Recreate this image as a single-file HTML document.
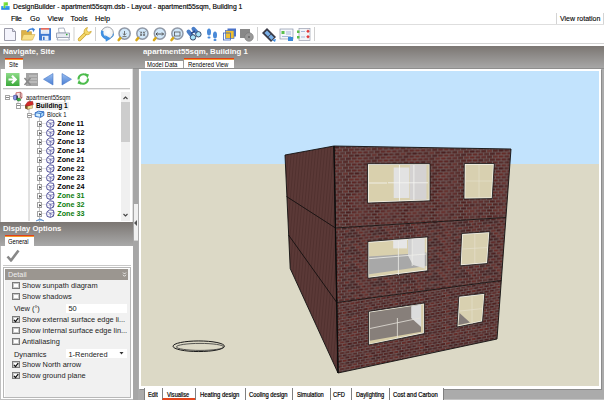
<!DOCTYPE html>
<html><head><meta charset="utf-8">
<style>
*{margin:0;padding:0;box-sizing:border-box}
html,body{width:604px;height:400px;overflow:hidden;background:#fff}
body{position:relative;font-family:"Liberation Sans",sans-serif;color:#000}
.a{position:absolute}
.t{position:absolute;white-space:nowrap;line-height:1}
.hd{background:linear-gradient(#7b7672,#a9a9a9)}
.cb{position:absolute;width:8px;height:7.6px;border:1px solid #7a7a7a;background:#fff;box-shadow:inset 0 0 0 1px #c8c8c8}
.lbl{font-size:7.4px;color:#222}
.ex{position:absolute;width:5px;height:5.5px;border:1px solid #a4a4a4;background:#fff;border-radius:0.5px}
.tab{position:absolute;top:388px;height:12px;background:#fff;border-left:1px solid #808080;border-right:1px solid #808080}
.tt{position:absolute;top:391.6px;font-size:5.9px;white-space:nowrap;line-height:1;color:#000;-webkit-text-stroke:0.2px #000}
</style></head><body>

<!-- ============ title bar ============ -->
<svg class="a" style="left:0;top:0" width="12" height="12" viewBox="0 0 12 12">
 <defs><linearGradient id="ig" x1="0" y1="0" x2="1" y2="1"><stop offset="0" stop-color="#9af04a"/><stop offset="1" stop-color="#3cc020"/></linearGradient>
 <linearGradient id="ib" x1="0" y1="0" x2="0" y2="1"><stop offset="0" stop-color="#48b0f8"/><stop offset="1" stop-color="#1a78e0"/></linearGradient></defs>
 <path d="M1.2 6h2.4v2h1.6v-2h4.4v3.8h-8.4z" fill="url(#ib)"/>
 <path d="M3.6 2.2h4.2v3.4h-2.6v2.6h-1.6z" fill="url(#ig)"/>
</svg>
<div class="t" style="left:13px;top:3.8px;font-size:6.8px;color:#000;-webkit-text-stroke:0.15px #000">DesignBuilder - apartment55sqm.dsb - Layout - apartment55sqm, Building 1</div>

<!-- ============ menu ============ -->
<div class="t" style="left:11px;top:15.1px;font-size:7.3px;-webkit-text-stroke:0.12px #000;letter-spacing:-0.3px">File</div>
<div class="t" style="left:30px;top:15.1px;font-size:7.3px;-webkit-text-stroke:0.12px #000">Go</div>
<div class="t" style="left:47.5px;top:15.1px;font-size:7.3px;-webkit-text-stroke:0.12px #000">View</div>
<div class="t" style="left:70.5px;top:15.1px;font-size:7.3px;-webkit-text-stroke:0.12px #000">Tools</div>
<div class="t" style="left:95px;top:15.1px;font-size:7.3px;-webkit-text-stroke:0.12px #000">Help</div>
<div class="a" style="left:556px;top:13px;width:47.5px;height:11px;border-left:1px solid #d4d4d4;border-right:1px solid #d4d4d4;background:#fff"></div>
<div class="t" style="left:560px;top:14.8px;font-size:7px;-webkit-text-stroke:0.1px #000">View rotation</div>
<div class="a" style="left:0;top:24px;width:604px;height:1px;background:#dedede"></div>

<!-- ============ toolbar ============ -->
<svg class="a" style="left:0;top:25px" width="320" height="18" viewBox="0 25 320 18">
 <!-- new -->
 <path d="M4.5 28.5h8l3 3v9h-11z" fill="#f4f4fc" stroke="#9a9aa8"/>
 <path d="M12.5 28.5v3h3" fill="#dde" stroke="#9a9aa8"/>
 <!-- open -->
 <path d="M21.5 30.5h4.5l1 1.2h4.5v8.3h-10z" fill="#dcb248" stroke="#b88c28" stroke-width="0.5"/>
 <path d="M23.5 34.5h11.5l-2.5 5.5h-11z" fill="#f8df88" stroke="#c9a23c" stroke-width="0.5"/>
 <path d="M27.5 32c1-2.5 3.5-3.6 5.6-2.6" fill="none" stroke="#3a7fd8" stroke-width="1.5"/>
 <path d="M32 27.5l3 1.8-1.8 3z" fill="#3a7fd8"/>
 <!-- save -->
 <rect x="39" y="28" width="12" height="12.5" rx="0.8" fill="#3d78d0"/>
 <rect x="40.8" y="28.2" width="8.4" height="5.6" fill="#f0f4fa"/>
 <rect x="40.8" y="28.2" width="8.4" height="1.4" fill="#e8503a"/>
 <path d="M41.8 31h6.4M41.8 32.4h6.4" stroke="#c8d4e8" stroke-width="0.5"/>
 <rect x="42" y="35.8" width="6.5" height="4.7" fill="#e4ecf8"/>
 <rect x="43" y="36.8" width="1.6" height="3.2" fill="#3d78d0"/>
 <!-- print -->
 <path d="M58.5 28.3l5.5-0.3 1.5 5h-6.5z" fill="#fff" stroke="#8a94a8" stroke-width="0.7"/>
 <path d="M56.5 33h13v4.8h-13z" fill="#e6e9f0" stroke="#8a94a8" stroke-width="0.8"/>
 <path d="M58 37.5h10.5l1 2.5h-12.5z" fill="#fff" stroke="#8a94a8" stroke-width="0.7"/>
 <circle cx="66.8" cy="34.6" r="0.8" fill="#2a2"/>
 <!-- sep -->
 <rect x="73.5" y="27" width="1" height="14" fill="#d0d0d0"/>
 <!-- wrench -->
 <path d="M79.5 39.5l6.5-6.5" stroke="#c9a02a" stroke-width="3.4" stroke-linecap="round"/>
 <path d="M79.5 39.5l6.5-6.5" stroke="#f4d86a" stroke-width="2.2" stroke-linecap="round"/>
 <path d="M84.5 33.5a4.2 4.2 0 0 1 3-6l-1 2.6 2.2 2.2 2.6-1a4.2 4.2 0 0 1-6 3z" fill="#f4d86a" stroke="#c9a02a" stroke-width="0.7"/>
 <rect x="95" y="27" width="1" height="14" fill="#d0d0d0"/>
 <!-- orbit bubble -->
 <defs><radialGradient id="bub" cx="0.55" cy="0.4" r="0.65"><stop offset="0" stop-color="#fff"/><stop offset="0.7" stop-color="#eef0f2"/><stop offset="1" stop-color="#b8bcc4"/></radialGradient></defs>
 <circle cx="107.4" cy="33" r="6" fill="url(#bub)" stroke="#8c9098" stroke-width="0.8"/>
 <path d="M102.4 30.8A5.6 5.6 0 0 0 106.4 38.2" fill="none" stroke="#3f90e2" stroke-width="2.6"/>
 <path d="M105.2 35.2l5.8 3.4-5.2 3.2z" fill="#3f90e2"/>
 <path d="M111.2 37.6c1.5-1 2.4-2.4 2.3-4" fill="none" stroke="#3f90e2" stroke-width="1.1"/>
 <!-- zoom icons -->
 <g id="zm">
  <circle cx="124.6" cy="33.6" r="5.6" fill="#d2e8fa" stroke="#9098a6" stroke-width="1.5"/>
  <path d="M120.3 38.2l-1.6 1.8" stroke="#d8a818" stroke-width="2.6" stroke-linecap="round"/>
 </g>
 <path d="M124.5 31v4M122.8 33.5l1.7 1.7 1.7-1.7M122.5 36.6h4" fill="none" stroke="#555" stroke-width="0.8"/>
 <use href="#zm" x="17.8"/>
 <path d="M139.8 31.3l1.8 1.8M141.6 31.6v1.5h-1.5M145.4 31.3l-1.8 1.8M143.6 31.6v1.5h1.5M139.8 36.3l1.8-1.8M141.6 36v-1.5h-1.5M145.4 36.3l-1.8-1.8M143.6 36v-1.5h1.5" fill="none" stroke="#555" stroke-width="0.7"/>
 <use href="#zm" x="35.3"/>
 <path d="M156 34h7.5M157.5 32.5l-1.5 1.5 1.5 1.5M162 32.5l1.5 1.5-1.5 1.5" fill="none" stroke="#444" stroke-width="0.9"/>
 <use href="#zm" x="52.8"/>
 <rect x="174.5" y="32" width="5.5" height="4" fill="none" stroke="#555" stroke-width="0.8"/>
 <!-- binoculars -->
 <path d="M188.5 31.5L193 37.2M193.5 28.8L198.3 34.2" stroke="#4a7ec8" stroke-width="4" stroke-linecap="round"/>
 <path d="M191 33.5l4-2.5" stroke="#2a4a88" stroke-width="1.5"/>
 <circle cx="193" cy="37.4" r="2.7" fill="#a8e4fa" stroke="#2a3a5a" stroke-width="0.9"/>
 <circle cx="198.4" cy="34.3" r="2.7" fill="#a8e4fa" stroke="#2a3a5a" stroke-width="0.9"/>
 <!-- footprints -->
 <ellipse cx="209" cy="32" rx="2" ry="3.5" fill="#4a8ad8"/>
 <rect x="207.5" y="36.5" width="3" height="2" rx="1" fill="#4a8ad8"/>
 <ellipse cx="215" cy="35" rx="2" ry="3.5" fill="#4a8ad8"/>
 <rect x="213.5" y="39" width="3" height="2" rx="1" fill="#4a8ad8"/>
 <!-- layers -->
 <rect x="227.5" y="28.5" width="8.5" height="8" fill="#4a72c8"/>
 <rect x="225.5" y="30.5" width="8.5" height="8" fill="#f0c030" stroke="#4a72c8" stroke-width="0.7"/>
 <rect x="223.5" y="33" width="7" height="7" fill="none" stroke="#3a62b8" stroke-width="0.8"/>
 <!-- grey camera -->
 <rect x="240" y="29" width="10" height="9" fill="#888"/>
 <circle cx="249" cy="37" r="4.3" fill="#999" stroke="#777" stroke-width="0.6"/>
 <circle cx="249" cy="37" r="1" fill="#666"/>
 <rect x="257" y="27" width="1" height="14" fill="#d0d0d0"/>
 <!-- film strip -->
 <path d="M262 33l5-5 9 9-5 5z" fill="#3a3a46"/>
 <path d="M264.5 33l2.5-2.5 3.5 3.5-2.5 2.5z" fill="#7ab0e8"/>
 <path d="M268.5 37l2.5-2.5 3 3-2.5 2.5z" fill="#7ab0e8"/>
 <path d="M272 40l4-1-1 3z" fill="#3a8ae0"/>
 <!-- dialog arrow -->
 <rect x="280" y="29" width="13" height="10" fill="#f4f6fa" stroke="#8a94a8" stroke-width="0.7"/>
 <rect x="281.5" y="31" width="3" height="3" fill="#5ac04a"/>
 <path d="M286 32h5M286 34h5M282 36.5h9" stroke="#8aa0c8" stroke-width="0.7"/>
 <path d="M288 37h5v4h-5z" fill="#3a88d8"/>
 <!-- form with diamonds -->
 <rect x="299" y="28.5" width="11" height="12" fill="#f2f4f8" stroke="#9aa0b0" stroke-width="0.7"/>
 <rect x="297" y="30.5" width="2.5" height="2.5" fill="#5ac04a"/>
 <rect x="297" y="36" width="2.5" height="2.5" fill="#5ac04a"/>
 <path d="M301 31.5h4M301 37h4" stroke="#8aa0c8" stroke-width="0.7"/>
 <path d="M308 29.5l1.8 1.8-1.8 1.8-1.8-1.8z M308 35l1.8 1.8-1.8 1.8-1.8-1.8z" fill="#e03838"/>
 <rect x="314" y="27" width="1" height="14" fill="#d0d0d0"/>
</svg>
<div class="a" style="left:0;top:42.5px;width:604px;height:1px;background:#d4d4d4"></div>

<!-- ============ gray app background + header band ============ -->
<div class="a" style="left:0;top:46px;width:604px;height:354px;background:#ababab"></div>
<div class="a hd" style="left:0;top:46px;width:604px;height:23px"></div>
<div class="t" style="left:3.2px;top:48.2px;font-size:7.2px;font-weight:bold;color:#fafafa;transform:scaleX(1.10);transform-origin:0 0">Navigate, Site</div>
<div class="t" style="left:142.6px;top:47.8px;font-size:7.2px;font-weight:bold;color:#fafafa;transform:scaleX(1.09);transform-origin:0 0">apartment55sqm, Building 1</div>

<!-- Site tab -->
<div class="a" style="left:5px;top:58px;width:18px;height:11px;background:#fff;border-top:1px solid #e0401c;box-shadow:inset 0 1px 0 #f39a2a"></div>
<div class="t" style="left:9px;top:61.8px;font-size:7.1px;transform:scaleX(0.74);transform-origin:0 0">Site</div>

<!-- ============ left nav panel ============ -->
<div class="a" style="left:0;top:69px;width:133px;height:153px;background:#fff"></div>
<div class="a" style="left:132px;top:69px;width:1px;height:153px;background:#e0e0e0"></div>
<!-- nav icons -->
<svg class="a" style="left:0;top:69px" width="100" height="20" viewBox="0 69 100 20">
 <defs><linearGradient id="gg" x1="0" y1="0" x2="0" y2="1"><stop offset="0" stop-color="#8fdc8a"/><stop offset="1" stop-color="#3aa83a"/></linearGradient></defs>
 <rect x="6" y="73" width="13.5" height="13" fill="url(#gg)"/>
 <path d="M8.5 79.5h7M12 75.8l3.7 3.7-3.7 3.7" fill="none" stroke="#fff" stroke-width="2.2"/>
 <rect x="26" y="73" width="12" height="13" fill="#a4a4a4"/>
 <path d="M29 76h8M29 79h8M29 82h8" stroke="#cfcfcf" stroke-width="1"/>
 <path d="M24.5 85l6-7M24.5 78l6 7" stroke="#8a8a8a" stroke-width="1.6"/>
 <defs><linearGradient id="tb" x1="0" y1="0" x2="0" y2="1"><stop offset="0" stop-color="#9cc0f0"/><stop offset="1" stop-color="#4a7ed4"/></linearGradient></defs>
 <path d="M53 73.5v11.5l-9.5-5.75z" fill="url(#tb)" stroke="#4a78c8" stroke-width="0.6"/>
 <path d="M62 73.5v11.5l9.5-5.75z" fill="url(#tb)" stroke="#4a78c8" stroke-width="0.6"/>
 <path d="M78.5 79.5a5 5 0 0 1 8.5-3.8" fill="none" stroke="#4cbc4c" stroke-width="2"/>
 <path d="M85 73.2l4 1.2-1.6 4z" fill="#4cbc4c"/>
 <path d="M88 78.5a5 5 0 0 1-8.5 3.8" fill="none" stroke="#4cbc4c" stroke-width="2"/>
 <path d="M81.5 84.8l-4-1.2 1.6-4z" fill="#4cbc4c"/>
</svg>
<div class="a" style="left:3px;top:88px;width:127px;height:1px;background:#c4c4c4"></div><div class="a" style="left:3px;top:89px;width:127px;height:1px;background:#ececec"></div>

<!-- tree -->
<div class="a" style="left:121px;top:92px;width:9px;height:129px;background:#f0f0f0"></div>
<div class="a" style="left:121px;top:102px;width:9px;height:40px;background:#cdcdcd"></div>
<svg class="a" style="left:121px;top:93px" width="9" height="9"><path d="M2.5 6l2-2 2 2" fill="none" stroke="#444" stroke-width="1.1"/></svg>
<svg class="a" style="left:121px;top:211px" width="9" height="9"><path d="M2.5 3l2 2 2-2" fill="none" stroke="#444" stroke-width="1.1"/></svg>

<svg class="a" style="left:0;top:89px" width="121" height="133" viewBox="0 89 121 133">
 <g stroke="#c4c4c4" stroke-width="1" fill="none">
  <path d="M18 100v5.5M29 109v112M39.5 118v104"/>
  <path d="M42.5 123.5h3M42.5 132.5h3M42.5 141.5h3M42.5 150.5h3M42.5 159.5h3M42.5 168.5h3M42.5 177.5h3M42.5 186.5h3M42.5 195.5h3M42.5 204.5h3M42.5 213.5h3" stroke-dasharray="1 1"/>
  <path d="M10 96.5h3M20.5 105.5h4M31 114.5h4"/>
 </g>
</svg>
<div class="ex" style="left:5px;top:94.5px"></div><div class="a" style="left:6px;top:96.6px;width:3px;height:1px;background:#8a8a8a"></div>
<div class="ex" style="left:15.5px;top:103px"></div><div class="a" style="left:16.5px;top:105.1px;width:3px;height:1px;background:#8a8a8a"></div>
<div class="ex" style="left:26.5px;top:112.5px"></div><div class="a" style="left:27.5px;top:114.6px;width:3px;height:1px;background:#8a8a8a"></div>

<!-- tree icons -->
<svg class="a" style="left:12px;top:91px" width="12" height="11" viewBox="12 91 12 11">
 <path d="M16 92.8l4.3-0.6 1.6 1.2v4.6l-4.5 0.6-1.4-1z" fill="#f8e4e4" stroke="#b02828" stroke-width="0.6"/>
 <path d="M20.3 92.2v4.8l1.6 1.2" fill="none" stroke="#6a1818" stroke-width="0.6"/>
 <path d="M13.6 95.6l2.6-0.6 1 0.7v3.8l-2.6 0.4-1-0.7z" fill="#8c9ce8" stroke="#30308a" stroke-width="0.6"/>
 <path d="M17.1 95.7v3.9" stroke="#111" stroke-width="1"/>
 <path d="M17 98.6l2.4-0.5 1.2 0.9v1.6l-2.4 0.4-1.2-0.8z" fill="#3cb04a" stroke="#1a6a28" stroke-width="0.5"/>
</svg>
<svg class="a" style="left:24px;top:101px" width="10" height="9" viewBox="24 101 10 9">
 <path d="M25 105.5l2.5-2.5 2.5 2.5v3.5l-2.5 0.5-2.5-1z" fill="#7a5a2a"/>
 <path d="M27.5 106l5-1v3.2l-5 1z" fill="#f0df9a" stroke="#8a6a30" stroke-width="0.4"/>
 <path d="M25 105.5l2.8-3.8 4.8-0.4 0.8 3.2-5.4 1.4z" fill="#d42a2a" stroke="#8a1a1a" stroke-width="0.4"/>
</svg>
<svg class="a" style="left:34px;top:110px" width="11" height="9" viewBox="34 110 11 9">
 <path d="M35.2 112.8l3.2-1.6 5.4 0.6v3.6l-3.2 1.9-5.4-0.9z" fill="#a8d8f8" stroke="#2a64c0" stroke-width="0.9"/>
 <path d="M35.2 112.8l5.4 0.8 3.2-1.8M40.6 113.6v3.7" fill="none" stroke="#2a64c0" stroke-width="0.8"/>
 <path d="M36.5 113.5l3.5 0.5v2.5l-3.5-0.5z" fill="#d8f0ff"/>
</svg>
<div class="a" style="left:35px;top:102px;width:34px;height:7.5px;background:#f0f0f0"></div>
<div class="t" style="left:25.8px;top:93.9px;color:#111;font-size:7.2px;transform:scaleX(0.824);transform-origin:0 0">apartment55sqm</div>
<div class="t" style="left:35.8px;top:102.7px;font-weight:bold;color:#000;font-size:6.9px;transform:scaleX(0.952);transform-origin:0 0">Building 1</div>
<div class="t" style="left:46.8px;top:110.6px;color:#111;font-size:7.6px;transform:scaleX(0.78);transform-origin:0 0">Block 1</div>

<div class="ex" style="left:37.2px;top:121.2px;width:5.2px;height:5.6px;border-color:#a0a0a0"></div><svg class="a" style="left:38.8px;top:122.7px" width="3" height="3"><path d="M0.3 0v2.8l1.8-1.4z" fill="#111"/></svg>
<svg class="a" style="left:45.5px;top:119.2px" width="9" height="9" viewBox="0 0 9 9"><path d="M1.2 2.6l2.6-1.8 3.6 0.6 0.6 2.6-0.6 3.2-3 1.2-3.2-1-0.6-2.6z" fill="none" stroke="#34348a" stroke-width="0.85"/><path d="M1.2 2.6l3.2 1.6 3.6-0.8M4.4 4.2v4.2M2.6 5.6l1.8-1.4 2.8 2.6" fill="none" stroke="#4a4a9a" stroke-width="0.6"/></svg>
<div class="t" style="left:57.3px;top:120.3px;font-size:7.2px;font-weight:bold;color:#000">Zone 11</div>
<div class="ex" style="left:37.2px;top:130.2px;width:5.2px;height:5.6px;border-color:#a0a0a0"></div><svg class="a" style="left:38.8px;top:131.7px" width="3" height="3"><path d="M0.3 0v2.8l1.8-1.4z" fill="#111"/></svg>
<svg class="a" style="left:45.5px;top:128.2px" width="9" height="9" viewBox="0 0 9 9"><path d="M1.2 2.6l2.6-1.8 3.6 0.6 0.6 2.6-0.6 3.2-3 1.2-3.2-1-0.6-2.6z" fill="none" stroke="#34348a" stroke-width="0.85"/><path d="M1.2 2.6l3.2 1.6 3.6-0.8M4.4 4.2v4.2M2.6 5.6l1.8-1.4 2.8 2.6" fill="none" stroke="#4a4a9a" stroke-width="0.6"/></svg>
<div class="t" style="left:57.3px;top:129.3px;font-size:7.2px;font-weight:bold;color:#000">Zone 12</div>
<div class="ex" style="left:37.2px;top:139.2px;width:5.2px;height:5.6px;border-color:#a0a0a0"></div><svg class="a" style="left:38.8px;top:140.7px" width="3" height="3"><path d="M0.3 0v2.8l1.8-1.4z" fill="#111"/></svg>
<svg class="a" style="left:45.5px;top:137.2px" width="9" height="9" viewBox="0 0 9 9"><path d="M1.2 2.6l2.6-1.8 3.6 0.6 0.6 2.6-0.6 3.2-3 1.2-3.2-1-0.6-2.6z" fill="none" stroke="#34348a" stroke-width="0.85"/><path d="M1.2 2.6l3.2 1.6 3.6-0.8M4.4 4.2v4.2M2.6 5.6l1.8-1.4 2.8 2.6" fill="none" stroke="#4a4a9a" stroke-width="0.6"/></svg>
<div class="t" style="left:57.3px;top:138.3px;font-size:7.2px;font-weight:bold;color:#000">Zone 13</div>
<div class="ex" style="left:37.2px;top:148.2px;width:5.2px;height:5.6px;border-color:#a0a0a0"></div><svg class="a" style="left:38.8px;top:149.7px" width="3" height="3"><path d="M0.3 0v2.8l1.8-1.4z" fill="#111"/></svg>
<svg class="a" style="left:45.5px;top:146.2px" width="9" height="9" viewBox="0 0 9 9"><path d="M1.2 2.6l2.6-1.8 3.6 0.6 0.6 2.6-0.6 3.2-3 1.2-3.2-1-0.6-2.6z" fill="none" stroke="#34348a" stroke-width="0.85"/><path d="M1.2 2.6l3.2 1.6 3.6-0.8M4.4 4.2v4.2M2.6 5.6l1.8-1.4 2.8 2.6" fill="none" stroke="#4a4a9a" stroke-width="0.6"/></svg>
<div class="t" style="left:57.3px;top:147.3px;font-size:7.2px;font-weight:bold;color:#000">Zone 14</div>
<div class="ex" style="left:37.2px;top:157.2px;width:5.2px;height:5.6px;border-color:#a0a0a0"></div><svg class="a" style="left:38.8px;top:158.7px" width="3" height="3"><path d="M0.3 0v2.8l1.8-1.4z" fill="#111"/></svg>
<svg class="a" style="left:45.5px;top:155.2px" width="9" height="9" viewBox="0 0 9 9"><path d="M1.2 2.6l2.6-1.8 3.6 0.6 0.6 2.6-0.6 3.2-3 1.2-3.2-1-0.6-2.6z" fill="none" stroke="#34348a" stroke-width="0.85"/><path d="M1.2 2.6l3.2 1.6 3.6-0.8M4.4 4.2v4.2M2.6 5.6l1.8-1.4 2.8 2.6" fill="none" stroke="#4a4a9a" stroke-width="0.6"/></svg>
<div class="t" style="left:57.3px;top:156.3px;font-size:7.2px;font-weight:bold;color:#000">Zone 21</div>
<div class="ex" style="left:37.2px;top:166.2px;width:5.2px;height:5.6px;border-color:#a0a0a0"></div><svg class="a" style="left:38.8px;top:167.7px" width="3" height="3"><path d="M0.3 0v2.8l1.8-1.4z" fill="#111"/></svg>
<svg class="a" style="left:45.5px;top:164.2px" width="9" height="9" viewBox="0 0 9 9"><path d="M1.2 2.6l2.6-1.8 3.6 0.6 0.6 2.6-0.6 3.2-3 1.2-3.2-1-0.6-2.6z" fill="none" stroke="#34348a" stroke-width="0.85"/><path d="M1.2 2.6l3.2 1.6 3.6-0.8M4.4 4.2v4.2M2.6 5.6l1.8-1.4 2.8 2.6" fill="none" stroke="#4a4a9a" stroke-width="0.6"/></svg>
<div class="t" style="left:57.3px;top:165.3px;font-size:7.2px;font-weight:bold;color:#000">Zone 22</div>
<div class="ex" style="left:37.2px;top:175.2px;width:5.2px;height:5.6px;border-color:#a0a0a0"></div><svg class="a" style="left:38.8px;top:176.7px" width="3" height="3"><path d="M0.3 0v2.8l1.8-1.4z" fill="#111"/></svg>
<svg class="a" style="left:45.5px;top:173.2px" width="9" height="9" viewBox="0 0 9 9"><path d="M1.2 2.6l2.6-1.8 3.6 0.6 0.6 2.6-0.6 3.2-3 1.2-3.2-1-0.6-2.6z" fill="none" stroke="#34348a" stroke-width="0.85"/><path d="M1.2 2.6l3.2 1.6 3.6-0.8M4.4 4.2v4.2M2.6 5.6l1.8-1.4 2.8 2.6" fill="none" stroke="#4a4a9a" stroke-width="0.6"/></svg>
<div class="t" style="left:57.3px;top:174.3px;font-size:7.2px;font-weight:bold;color:#000">Zone 23</div>
<div class="ex" style="left:37.2px;top:184.2px;width:5.2px;height:5.6px;border-color:#a0a0a0"></div><svg class="a" style="left:38.8px;top:185.7px" width="3" height="3"><path d="M0.3 0v2.8l1.8-1.4z" fill="#111"/></svg>
<svg class="a" style="left:45.5px;top:182.2px" width="9" height="9" viewBox="0 0 9 9"><path d="M1.2 2.6l2.6-1.8 3.6 0.6 0.6 2.6-0.6 3.2-3 1.2-3.2-1-0.6-2.6z" fill="none" stroke="#34348a" stroke-width="0.85"/><path d="M1.2 2.6l3.2 1.6 3.6-0.8M4.4 4.2v4.2M2.6 5.6l1.8-1.4 2.8 2.6" fill="none" stroke="#4a4a9a" stroke-width="0.6"/></svg>
<div class="t" style="left:57.3px;top:183.3px;font-size:7.2px;font-weight:bold;color:#000">Zone 24</div>
<div class="ex" style="left:37.2px;top:193.2px;width:5.2px;height:5.6px;border-color:#a0a0a0"></div><svg class="a" style="left:38.8px;top:194.7px" width="3" height="3"><path d="M0.3 0v2.8l1.8-1.4z" fill="#111"/></svg>
<svg class="a" style="left:45.5px;top:191.2px" width="9" height="9" viewBox="0 0 9 9"><path d="M1.2 2.6l2.6-1.8 3.6 0.6 0.6 2.6-0.6 3.2-3 1.2-3.2-1-0.6-2.6z" fill="none" stroke="#34348a" stroke-width="0.85"/><path d="M1.2 2.6l3.2 1.6 3.6-0.8M4.4 4.2v4.2M2.6 5.6l1.8-1.4 2.8 2.6" fill="none" stroke="#4a4a9a" stroke-width="0.6"/></svg>
<div class="t" style="left:57.3px;top:192.3px;font-size:7.2px;font-weight:bold;color:#0b7d0b">Zone 31</div>
<div class="ex" style="left:37.2px;top:202.2px;width:5.2px;height:5.6px;border-color:#a0a0a0"></div><svg class="a" style="left:38.8px;top:203.7px" width="3" height="3"><path d="M0.3 0v2.8l1.8-1.4z" fill="#111"/></svg>
<svg class="a" style="left:45.5px;top:200.2px" width="9" height="9" viewBox="0 0 9 9"><path d="M1.2 2.6l2.6-1.8 3.6 0.6 0.6 2.6-0.6 3.2-3 1.2-3.2-1-0.6-2.6z" fill="none" stroke="#34348a" stroke-width="0.85"/><path d="M1.2 2.6l3.2 1.6 3.6-0.8M4.4 4.2v4.2M2.6 5.6l1.8-1.4 2.8 2.6" fill="none" stroke="#4a4a9a" stroke-width="0.6"/></svg>
<div class="t" style="left:57.3px;top:201.3px;font-size:7.2px;font-weight:bold;color:#0b7d0b">Zone 32</div>
<div class="ex" style="left:37.2px;top:211.2px;width:5.2px;height:5.6px;border-color:#a0a0a0"></div><svg class="a" style="left:38.8px;top:212.7px" width="3" height="3"><path d="M0.3 0v2.8l1.8-1.4z" fill="#111"/></svg>
<svg class="a" style="left:45.5px;top:209.2px" width="9" height="9" viewBox="0 0 9 9"><path d="M1.2 2.6l2.6-1.8 3.6 0.6 0.6 2.6-0.6 3.2-3 1.2-3.2-1-0.6-2.6z" fill="none" stroke="#34348a" stroke-width="0.85"/><path d="M1.2 2.6l3.2 1.6 3.6-0.8M4.4 4.2v4.2M2.6 5.6l1.8-1.4 2.8 2.6" fill="none" stroke="#4a4a9a" stroke-width="0.6"/></svg>
<div class="t" style="left:57.3px;top:210.3px;font-size:7.2px;font-weight:bold;color:#0b7d0b">Zone 33</div>
<svg class="a" style="left:35px;top:218px" width="10" height="4" viewBox="0 0 10 4"><path d="M1 3l4-2 4 2" fill="#a8d0f4" stroke="#3a70b8" stroke-width="0.8"/></svg>

<!-- ============ display options ============ -->
<div class="a hd" style="left:0;top:222px;width:133px;height:24px"></div>
<div class="t" style="left:3.1px;top:225.2px;font-size:7.2px;font-weight:bold;color:#fafafa;transform:scaleX(1.066);transform-origin:0 0">Display Options</div>
<div class="a" style="left:5px;top:235px;width:29px;height:11px;background:#fff;border-top:1px solid #e0401c;box-shadow:inset 0 1px 0 #f39a2a"></div>
<div class="t" style="left:8.1px;top:238.8px;font-size:7.1px;transform:scaleX(0.816);transform-origin:0 0">General</div>
<div class="a" style="left:0;top:246px;width:133px;height:154px;background:#fff"></div>
<svg class="a" style="left:6px;top:249px" width="14" height="13" viewBox="0 0 14 13"><path d="M1.5 7.5l3.5 4 7.5-10" fill="none" stroke="#888" stroke-width="2.6" stroke-linejoin="round"/></svg>
<div class="a" style="left:3px;top:265px;width:128px;height:1px;background:#c8c8c8"></div>
<div class="a" style="left:2.5px;top:266.5px;width:128.5px;height:131px;border:1px solid #b8b8b8;background:#f1f1f1;box-shadow:inset 1px 1px 0 #fff"></div>
<div class="a" style="left:5px;top:269px;width:123px;height:10.5px;background:#9b9690"></div>
<div class="t" style="left:8px;top:271px;font-size:7.3px;color:#eee">Detail</div>
<svg class="a" style="left:121.5px;top:271px" width="5" height="7"><path d="M1 1.5l1.5 1.5 1.5-1.5M1 3.8l1.5 1.5 1.5-1.5" fill="none" stroke="#f4f4f4" stroke-width="0.9"/></svg>

<div class="cb" style="left:12px;top:281.5px"></div><div class="t lbl" style="left:22px;top:281.8px">Show sunpath diagram</div>
<div class="cb" style="left:12px;top:292.5px"></div><div class="t lbl" style="left:22px;top:292.8px">Show shadows</div>
<div class="t lbl" style="left:14px;top:305px">View (°)</div>
<div class="a" style="left:66px;top:303.5px;width:60.5px;height:9px;background:#fff"></div>
<div class="t lbl" style="left:68.5px;top:305px">50</div>
<div class="cb" style="left:12px;top:315.5px"></div><div class="t lbl" style="left:22px;top:315.8px">Show external surface edge li...</div>
<div class="cb" style="left:12px;top:326.5px"></div><div class="t lbl" style="left:22px;top:326.8px">Show internal surface edge lin...</div>
<div class="cb" style="left:12px;top:337.5px"></div><div class="t lbl" style="left:22px;top:337.8px">Antialiasing</div>
<div class="t lbl" style="left:14px;top:350.8px">Dynamics</div>
<div class="a" style="left:66px;top:348.5px;width:60.5px;height:9.5px;background:#fff"></div>
<div class="t lbl" style="left:68.5px;top:350.8px">1-Rendered</div>
<svg class="a" style="left:119px;top:351px" width="5" height="4"><path d="M0.5 1h4l-2 2.5z" fill="#333"/></svg>
<div class="cb" style="left:12px;top:360.5px"></div><div class="t lbl" style="left:22px;top:360.8px">Show North arrow</div>
<div class="cb" style="left:12px;top:371.5px"></div><div class="t lbl" style="left:22px;top:371.8px">Show ground plane</div>
<svg class="a" style="left:12px;top:315.5px" width="8" height="8"><path d="M2 3.9l1.5 1.7 2.7-3.5" fill="none" stroke="#111" stroke-width="1.3"/></svg>
<svg class="a" style="left:12px;top:360.5px" width="8" height="8"><path d="M2 3.9l1.5 1.7 2.7-3.5" fill="none" stroke="#111" stroke-width="1.3"/></svg>
<svg class="a" style="left:12px;top:371.5px" width="8" height="8"><path d="M2 3.9l1.5 1.7 2.7-3.5" fill="none" stroke="#111" stroke-width="1.3"/></svg>

<div class="a" style="left:0;top:69px;width:1px;height:153px;background:#c0c0c0"></div>
<div class="a" style="left:0;top:246px;width:1px;height:154px;background:#c0c0c0"></div>
<div class="a" style="left:0;top:399px;width:133px;height:1px;background:#c0c0c0"></div>
<!-- ============ splitter ============ -->
<div class="a" style="left:133px;top:69px;width:5px;height:331px;background:#a6a6a6"></div>
<div class="a" style="left:133.5px;top:204px;width:4px;height:37px;background:#f0f0f0;border-bottom:1px solid #d0d0d0"></div>
<svg class="a" style="left:133px;top:219px" width="5" height="8"><path d="M4 1v6l-3-3z" fill="#555"/></svg>

<!-- ============ viewport tabs ============ -->
<div class="a" style="left:144.6px;top:60.5px;width:38px;height:7.5px;background:#fff"></div>
<div class="t" style="left:147.3px;top:61.4px;font-size:7px;transform:scaleX(0.85);transform-origin:0 0">Model Data</div>
<div class="a" style="left:184.2px;top:57.7px;width:49.6px;height:10.3px;background:#fff;border-top:1px solid #e0401c;box-shadow:inset 0 1px 0 #f39a2a"></div>
<div class="t" style="left:188px;top:61.4px;font-size:7px;transform:scaleX(0.846);transform-origin:0 0">Rendered View</div>

<!-- ============ viewport ============ -->
<div class="a" style="left:133px;top:68px;width:471px;height:1px;background:#8e8e8e"></div>
<div class="a" style="left:139px;top:69px;width:462px;height:319.5px;background:#fff;box-shadow:1px 1px 0 #8c8c8c"></div>
<div class="a" style="left:141px;top:71px;width:458px;height:93.3px;background:#c2e3fd"></div>
<div class="a" style="left:141px;top:164.3px;width:458px;height:221.7px;background:#dcd9c6"></div>

<svg id="scene" class="a" style="left:0;top:0" width="604" height="400" viewBox="0 0 604 400">
 <defs>
  <clipPath id="vp"><rect x="141" y="71" width="458" height="315"/></clipPath>
  <pattern id="b3" patternUnits="userSpaceOnUse" width="30.00" height="18.60" patternTransform="translate(334 146) skewY(-2) scale(0.96)"><rect width="30.00" height="18.60" fill="#706464"/><rect x="-5.60" y="0.40" width="5.10" height="2.25" fill="#442020"/><rect x="0.40" y="0.40" width="5.10" height="2.25" fill="#4a1e1e"/><rect x="6.40" y="0.40" width="5.10" height="2.25" fill="#582c2a"/><rect x="12.40" y="0.40" width="5.10" height="2.25" fill="#50201e"/><rect x="18.40" y="0.40" width="5.10" height="2.25" fill="#5c2624"/><rect x="24.40" y="0.40" width="5.10" height="2.25" fill="#5c2624"/><rect x="30.40" y="0.40" width="5.10" height="2.25" fill="#442020"/><rect x="-2.60" y="3.50" width="5.10" height="2.25" fill="#50201e"/><rect x="3.40" y="3.50" width="5.10" height="2.25" fill="#642c28"/><rect x="9.40" y="3.50" width="5.10" height="2.25" fill="#50201e"/><rect x="15.40" y="3.50" width="5.10" height="2.25" fill="#5c2624"/><rect x="21.40" y="3.50" width="5.10" height="2.25" fill="#582c2a"/><rect x="27.40" y="3.50" width="5.10" height="2.25" fill="#582c2a"/><rect x="33.40" y="3.50" width="5.10" height="2.25" fill="#5c2624"/><rect x="-5.60" y="6.60" width="5.10" height="2.25" fill="#642c28"/><rect x="0.40" y="6.60" width="5.10" height="2.25" fill="#5c2624"/><rect x="6.40" y="6.60" width="5.10" height="2.25" fill="#582c2a"/><rect x="12.40" y="6.60" width="5.10" height="2.25" fill="#50201e"/><rect x="18.40" y="6.60" width="5.10" height="2.25" fill="#5c2624"/><rect x="24.40" y="6.60" width="5.10" height="2.25" fill="#642c28"/><rect x="30.40" y="6.60" width="5.10" height="2.25" fill="#50201e"/><rect x="-2.60" y="9.70" width="5.10" height="2.25" fill="#582c2a"/><rect x="3.40" y="9.70" width="5.10" height="2.25" fill="#50201e"/><rect x="9.40" y="9.70" width="5.10" height="2.25" fill="#642c28"/><rect x="15.40" y="9.70" width="5.10" height="2.25" fill="#50201e"/><rect x="21.40" y="9.70" width="5.10" height="2.25" fill="#4a1e1e"/><rect x="27.40" y="9.70" width="5.10" height="2.25" fill="#542624"/><rect x="33.40" y="9.70" width="5.10" height="2.25" fill="#582c2a"/><rect x="-5.60" y="12.80" width="5.10" height="2.25" fill="#4a1e1e"/><rect x="0.40" y="12.80" width="5.10" height="2.25" fill="#5c2624"/><rect x="6.40" y="12.80" width="5.10" height="2.25" fill="#542624"/><rect x="12.40" y="12.80" width="5.10" height="2.25" fill="#4a1e1e"/><rect x="18.40" y="12.80" width="5.10" height="2.25" fill="#5c2624"/><rect x="24.40" y="12.80" width="5.10" height="2.25" fill="#642c28"/><rect x="30.40" y="12.80" width="5.10" height="2.25" fill="#442020"/><rect x="-2.60" y="15.90" width="5.10" height="2.25" fill="#5c2624"/><rect x="3.40" y="15.90" width="5.10" height="2.25" fill="#5c2624"/><rect x="9.40" y="15.90" width="5.10" height="2.25" fill="#50201e"/><rect x="15.40" y="15.90" width="5.10" height="2.25" fill="#642c28"/><rect x="21.40" y="15.90" width="5.10" height="2.25" fill="#662a26"/><rect x="27.40" y="15.90" width="5.10" height="2.25" fill="#582c2a"/><rect x="33.40" y="15.90" width="5.10" height="2.25" fill="#442020"/></pattern>
  <pattern id="b2" patternUnits="userSpaceOnUse" width="30.00" height="18.60" patternTransform="translate(336 228) skewY(-5.7) scale(0.92)"><rect width="30.00" height="18.60" fill="#706464"/><rect x="-5.60" y="0.40" width="5.10" height="2.25" fill="#662a26"/><rect x="0.40" y="0.40" width="5.10" height="2.25" fill="#662a26"/><rect x="6.40" y="0.40" width="5.10" height="2.25" fill="#442020"/><rect x="12.40" y="0.40" width="5.10" height="2.25" fill="#542624"/><rect x="18.40" y="0.40" width="5.10" height="2.25" fill="#642c28"/><rect x="24.40" y="0.40" width="5.10" height="2.25" fill="#4a1e1e"/><rect x="30.40" y="0.40" width="5.10" height="2.25" fill="#642c28"/><rect x="-2.60" y="3.50" width="5.10" height="2.25" fill="#5c2624"/><rect x="3.40" y="3.50" width="5.10" height="2.25" fill="#542624"/><rect x="9.40" y="3.50" width="5.10" height="2.25" fill="#662a26"/><rect x="15.40" y="3.50" width="5.10" height="2.25" fill="#442020"/><rect x="21.40" y="3.50" width="5.10" height="2.25" fill="#662a26"/><rect x="27.40" y="3.50" width="5.10" height="2.25" fill="#542624"/><rect x="33.40" y="3.50" width="5.10" height="2.25" fill="#5c2624"/><rect x="-5.60" y="6.60" width="5.10" height="2.25" fill="#5c2624"/><rect x="0.40" y="6.60" width="5.10" height="2.25" fill="#582c2a"/><rect x="6.40" y="6.60" width="5.10" height="2.25" fill="#4a1e1e"/><rect x="12.40" y="6.60" width="5.10" height="2.25" fill="#442020"/><rect x="18.40" y="6.60" width="5.10" height="2.25" fill="#4a1e1e"/><rect x="24.40" y="6.60" width="5.10" height="2.25" fill="#662a26"/><rect x="30.40" y="6.60" width="5.10" height="2.25" fill="#582c2a"/><rect x="-2.60" y="9.70" width="5.10" height="2.25" fill="#50201e"/><rect x="3.40" y="9.70" width="5.10" height="2.25" fill="#5c2624"/><rect x="9.40" y="9.70" width="5.10" height="2.25" fill="#442020"/><rect x="15.40" y="9.70" width="5.10" height="2.25" fill="#442020"/><rect x="21.40" y="9.70" width="5.10" height="2.25" fill="#442020"/><rect x="27.40" y="9.70" width="5.10" height="2.25" fill="#662a26"/><rect x="33.40" y="9.70" width="5.10" height="2.25" fill="#662a26"/><rect x="-5.60" y="12.80" width="5.10" height="2.25" fill="#5c2624"/><rect x="0.40" y="12.80" width="5.10" height="2.25" fill="#5c2624"/><rect x="6.40" y="12.80" width="5.10" height="2.25" fill="#542624"/><rect x="12.40" y="12.80" width="5.10" height="2.25" fill="#662a26"/><rect x="18.40" y="12.80" width="5.10" height="2.25" fill="#5c2624"/><rect x="24.40" y="12.80" width="5.10" height="2.25" fill="#50201e"/><rect x="30.40" y="12.80" width="5.10" height="2.25" fill="#542624"/><rect x="-2.60" y="15.90" width="5.10" height="2.25" fill="#662a26"/><rect x="3.40" y="15.90" width="5.10" height="2.25" fill="#542624"/><rect x="9.40" y="15.90" width="5.10" height="2.25" fill="#582c2a"/><rect x="15.40" y="15.90" width="5.10" height="2.25" fill="#442020"/><rect x="21.40" y="15.90" width="5.10" height="2.25" fill="#50201e"/><rect x="27.40" y="15.90" width="5.10" height="2.25" fill="#662a26"/><rect x="33.40" y="15.90" width="5.10" height="2.25" fill="#442020"/></pattern>
  <pattern id="b1" patternUnits="userSpaceOnUse" width="30.00" height="18.60" patternTransform="translate(337 302) skewY(-9.5) scale(0.86)"><rect width="30.00" height="18.60" fill="#706464"/><rect x="-5.60" y="0.40" width="5.10" height="2.25" fill="#4a1e1e"/><rect x="0.40" y="0.40" width="5.10" height="2.25" fill="#5c2624"/><rect x="6.40" y="0.40" width="5.10" height="2.25" fill="#662a26"/><rect x="12.40" y="0.40" width="5.10" height="2.25" fill="#50201e"/><rect x="18.40" y="0.40" width="5.10" height="2.25" fill="#642c28"/><rect x="24.40" y="0.40" width="5.10" height="2.25" fill="#542624"/><rect x="30.40" y="0.40" width="5.10" height="2.25" fill="#4a1e1e"/><rect x="-2.60" y="3.50" width="5.10" height="2.25" fill="#642c28"/><rect x="3.40" y="3.50" width="5.10" height="2.25" fill="#582c2a"/><rect x="9.40" y="3.50" width="5.10" height="2.25" fill="#582c2a"/><rect x="15.40" y="3.50" width="5.10" height="2.25" fill="#662a26"/><rect x="21.40" y="3.50" width="5.10" height="2.25" fill="#5c2624"/><rect x="27.40" y="3.50" width="5.10" height="2.25" fill="#4a1e1e"/><rect x="33.40" y="3.50" width="5.10" height="2.25" fill="#662a26"/><rect x="-5.60" y="6.60" width="5.10" height="2.25" fill="#582c2a"/><rect x="0.40" y="6.60" width="5.10" height="2.25" fill="#542624"/><rect x="6.40" y="6.60" width="5.10" height="2.25" fill="#4a1e1e"/><rect x="12.40" y="6.60" width="5.10" height="2.25" fill="#582c2a"/><rect x="18.40" y="6.60" width="5.10" height="2.25" fill="#542624"/><rect x="24.40" y="6.60" width="5.10" height="2.25" fill="#582c2a"/><rect x="30.40" y="6.60" width="5.10" height="2.25" fill="#442020"/><rect x="-2.60" y="9.70" width="5.10" height="2.25" fill="#582c2a"/><rect x="3.40" y="9.70" width="5.10" height="2.25" fill="#642c28"/><rect x="9.40" y="9.70" width="5.10" height="2.25" fill="#4a1e1e"/><rect x="15.40" y="9.70" width="5.10" height="2.25" fill="#5c2624"/><rect x="21.40" y="9.70" width="5.10" height="2.25" fill="#4a1e1e"/><rect x="27.40" y="9.70" width="5.10" height="2.25" fill="#4a1e1e"/><rect x="33.40" y="9.70" width="5.10" height="2.25" fill="#642c28"/><rect x="-5.60" y="12.80" width="5.10" height="2.25" fill="#642c28"/><rect x="0.40" y="12.80" width="5.10" height="2.25" fill="#50201e"/><rect x="6.40" y="12.80" width="5.10" height="2.25" fill="#662a26"/><rect x="12.40" y="12.80" width="5.10" height="2.25" fill="#4a1e1e"/><rect x="18.40" y="12.80" width="5.10" height="2.25" fill="#542624"/><rect x="24.40" y="12.80" width="5.10" height="2.25" fill="#542624"/><rect x="30.40" y="12.80" width="5.10" height="2.25" fill="#50201e"/><rect x="-2.60" y="15.90" width="5.10" height="2.25" fill="#4a1e1e"/><rect x="3.40" y="15.90" width="5.10" height="2.25" fill="#582c2a"/><rect x="9.40" y="15.90" width="5.10" height="2.25" fill="#442020"/><rect x="15.40" y="15.90" width="5.10" height="2.25" fill="#442020"/><rect x="21.40" y="15.90" width="5.10" height="2.25" fill="#4a1e1e"/><rect x="27.40" y="15.90" width="5.10" height="2.25" fill="#50201e"/><rect x="33.40" y="15.90" width="5.10" height="2.25" fill="#662a26"/></pattern>
  <pattern id="side" patternUnits="userSpaceOnUse" width="3" height="4" patternTransform="rotate(5)"><rect width="3" height="4" fill="#5b3937"/><rect x="0" width="1" height="4" fill="#51312f"/></pattern>
 </defs>
 <g clip-path="url(#vp)">
  <polygon points="285,155 334,146 338,373 290.2,268.5" fill="url(#side)"/>
  <polygon points="334,146 511,149 506,217.5 335.4,228" fill="url(#b3)"/>
  <polygon points="335.4,228 506,217.5 501.3,280.5 336.8,302.5" fill="url(#b2)"/>
  <polygon points="336.8,302.5 501.3,280.5 497,339 338,373" fill="url(#b1)"/>
  <path d="M290.2 268.5L285 155L334 146L511 149L497 339L338 373z M334 146L338 373" fill="none" stroke="#111" stroke-width="0.9"/>
  <path d="M334 146L338 373" stroke="#0c0c0c" stroke-width="1.3"/>
  <path d="M286.5 196.5L335.5 228L506 217.5M288.5 235L336.8 302.5L501.3 280.5" fill="none" stroke="#141010" stroke-width="0.9"/>
  <!-- windows -->
  <g stroke="#141414" stroke-width="0.8">
   <polygon points="367.5,163.7 430,163.7 430,200.8 367.5,203.1" fill="#f4f2ea"/>
   <polygon points="464.3,163.5 494.3,163.5 492.2,198.6 464,199" fill="#f4f2ea"/>
   <polygon points="367.9,241.5 427.7,236.9 427.7,270.8 367.9,278.3" fill="#f4f2ea"/>
   <polygon points="461.7,233.5 489.8,231.7 487.5,263.5 460.2,265.8" fill="#f4f2ea"/>
   <polygon points="368.6,311.4 424.4,303 424.4,333.6 368.6,345" fill="#f4f2ea"/>
   <polygon points="458.8,296.3 484.8,293.3 482.5,321.8 457,327" fill="#f4f2ea"/>
  </g>
  <!-- window 1 interior -->
  <polygon points="368.8,165 428.8,165 428.8,199.6 368.8,201.8" fill="#d9d0ad"/>
  <rect x="393.7" y="167.5" width="15.6" height="30.5" fill="#e2e2e2"/>
  <rect x="409.8" y="165" width="16.7" height="34.7" fill="#d4d2d2"/>
  <path d="M369 183h18M388 182.8h40M399.5 165v36M413.9 165v35" stroke="#f6f6f2" stroke-width="0.8"/>
  <!-- window 2 -->
  <polygon points="465.6,164.8 493,164.8 491,197.4 465.3,197.8" fill="#d8d0b0"/>
  <path d="M466 181h27M479 165v33" stroke="#e8e3d2" stroke-width="0.6"/>
  <!-- window 3 -->
  <polygon points="369.1,242.7 426.5,238.2 426.5,269.6 369.1,277" fill="#d9d0ad"/>
  <polygon points="369.1,256.4 408,254 426.5,252.5 426.5,266 369.1,274.3" fill="#a8a8a8"/>
  <rect x="393.2" y="239.8" width="13.8" height="8.6" fill="#e6e6e6"/>
  <polygon points="408.2,239 424.8,238.3 424.8,268.5 413,265 408.2,256" fill="#dcdcdc"/>
  <rect x="408.2" y="239" width="4" height="17" fill="#d0d0d0"/>
  <path d="M369 258.7l57-4.7M398.4 241v34M412.2 239v27" stroke="#efefea" stroke-width="0.8"/>
  <!-- window 4 -->
  <polygon points="462.9,234.7 488.5,233 486.3,262.3 461.5,264.5" fill="#d8d0b0"/>
  <path d="M462 249l26-1.5M474.8 234v30" stroke="#e8e3d2" stroke-width="0.6"/>
  <!-- window 5 -->
  <polygon points="369.8,312.6 423.2,304.3 423.2,332.4 369.8,343.7" fill="#d6cca6"/>
  <polygon points="369.8,312.6 411.2,306.2 421,304.6 421,331.8 369.8,340.8" fill="#877f7a"/>
  <polygon points="411.2,306.2 421.2,304.6 421.2,327 411.2,318" fill="#dcdcdc"/>
  <path d="M370 328.5l50-10.5M397.4 318v20" stroke="#e6e2da" stroke-width="0.8"/>
  <!-- window 6 -->
  <polygon points="460,297.5 483.6,294.6 481.4,320.8 458.2,325.8" fill="#d8d0b0"/>
  <polygon points="459.5,313 470,322.5 458.5,325" fill="#857d7a"/>
  <path d="M460 311l23-2.5M472 295v29" stroke="#e8e3d2" stroke-width="0.6"/>

  <!-- north arrow ellipse -->
  <ellipse cx="198.75" cy="346.25" rx="25.7" ry="5.3" fill="none" stroke="#1a1a1a" stroke-width="1"/>
  <ellipse cx="200" cy="346.9" rx="23.6" ry="3.5" fill="none" stroke="#333" stroke-width="0.8"/>

 </g>
</svg>

<!-- ============ bottom tabs ============ -->
<div class="tab" style="left:144px;width:19px"></div><div class="tt" style="left:147.6px;;font-size:6.8px;transform:scaleX(0.828);transform-origin:0 0">Edit</div>
<div class="tab" style="left:162px;width:34px;border-bottom:2px solid #e5461c"></div><div class="tt" style="left:167px;;font-size:6.8px;transform:scaleX(0.820);transform-origin:0 0">Visualise</div>
<div class="tab" style="left:195px;width:51px"></div><div class="tt" style="left:200px;;font-size:6.8px;transform:scaleX(0.867);transform-origin:0 0">Heating design</div>
<div class="tab" style="left:245px;width:48px"></div><div class="tt" style="left:249px;;font-size:6.8px;transform:scaleX(0.856);transform-origin:0 0">Cooling design</div>
<div class="tab" style="left:292px;width:39px"></div><div class="tt" style="left:297px;;font-size:6.8px;transform:scaleX(0.845);transform-origin:0 0">Simulation</div>
<div class="tab" style="left:330px;width:22px"></div><div class="tt" style="left:333.2px;;font-size:6.8px;transform:scaleX(0.852);transform-origin:0 0">CFD</div>
<div class="tab" style="left:351px;width:39px"></div><div class="tt" style="left:355.5px;;font-size:6.8px;transform:scaleX(0.836);transform-origin:0 0">Daylighting</div>
<div class="tab" style="left:389px;width:55px"></div><div class="tt" style="left:392.7px;;font-size:6.8px;transform:scaleX(0.870);transform-origin:0 0">Cost and Carbon</div>

<div class="a" style="left:444px;top:399px;width:160px;height:1px;background:#c4c4c4"></div>
</body></html>
